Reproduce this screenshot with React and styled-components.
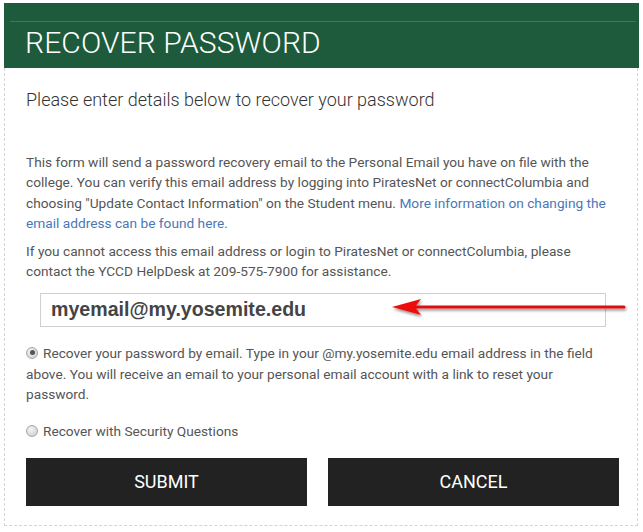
import React, { useState } from "react";
import styled, { createGlobalStyle } from "styled-components";

const GlobalStyle = createGlobalStyle`
  html, body {
    margin: 0;
    padding: 0;
    background: #ffffff;
  }
  body {
    font-family: Roboto, "Liberation Sans", Arial, sans-serif;
  }
`;

const Panel = styled.div`
  margin: 3px 0 0 4px;
  width: 634px;
  height: 523px;
  box-sizing: border-box;
  border: 1px dashed #d4d4d4;
  border-top: none;
`;

const Header = styled.div`
  height: 65px;
  margin: 0 -2px 0 -1px;
  background: #1d5b3c;
  padding: 18px 3px 0 6px;
  box-sizing: border-box;
`;

const HeaderInner = styled.div`
  border-top: 1px solid #3f7a45;
  padding-left: 15px;
`;

const Title = styled.h1`
  margin: 0;
  padding-top: 4px;
  font-family: Roboto, "Liberation Sans", sans-serif;
  font-weight: 300;
  font-size: 30px;
  line-height: 34px;
  color: #ffffff;
  letter-spacing: 0.1px;
`;

const Body = styled.div`
  padding: 20px 18px 0 21px;
`;

const Subtitle = styled.h2`
  margin: 0 0 40px;
  font-weight: 300;
  font-size: 18px;
  line-height: 24px;
  color: #333333;
`;

const Text = styled.p`
  margin: 0 0 ${(p) => p.$gap || 8}px;
  font-size: 13.7px;
  font-weight: 400;
  line-height: 20.3px;
  color: #555555;
`;

const Link = styled.a`
  color: #4a78b4;
  text-decoration: none;
`;

const InputWrap = styled.div`
  position: relative;
  margin: 11px 0 0 14px;
  width: 566px;
`;

const EmailInput = styled.input`
  display: block;
  width: 100%;
  height: 34px;
  box-sizing: border-box;
  border: 1px solid #d0d0d0;
  padding: 0 10px;
  font-family: "Liberation Sans", Arial, sans-serif;
  font-weight: 700;
  font-size: 19.6px;
  color: #444444;
  outline: none;
  background: #ffffff;
`;

const Arrow = styled.svg`
  position: absolute;
  left: 348px;
  top: 3px;
  pointer-events: none;
`;

const Option = styled.label`
  display: block;
  margin-top: ${(p) => p.$top}px;
  font-size: 13.7px;
  line-height: 20.8px;
  color: #555555;
  cursor: pointer;
`;

const Radio = styled.span`
  display: inline-block;
  width: 10px;
  height: 10px;
  border-radius: 50%;
  border: 1px solid #a8a8a8;
  background: radial-gradient(circle at 40% 35%, #f4f4f4, #c9c9c9);
  margin-right: 5px;
  vertical-align: -1px;
  position: relative;

  &::after {
    content: "";
    display: ${(p) => (p.$checked ? "block" : "none")};
    position: absolute;
    left: 2.5px;
    top: 2.5px;
    width: 5px;
    height: 5px;
    border-radius: 50%;
    background: #555555;
  }
`;

const Buttons = styled.div`
  display: flex;
  margin-top: 16px;
`;

const Button = styled.button`
  width: ${(p) => p.$w}px;
  margin-left: ${(p) => p.$ml || 0}px;
  height: 48px;
  border: none;
  background: #222222;
  color: #ffffff;
  font-family: Roboto, "Liberation Sans", sans-serif;
  font-weight: 400;
  font-size: 18px;
  cursor: pointer;
`;

export default function App() {
  const [mode, setMode] = useState("email");
  const [email, setEmail] = useState("myemail@my.yosemite.edu");

  return (
    <>
      <GlobalStyle />
      <Panel>
        <Header>
          <HeaderInner>
            <Title>RECOVER PASSWORD</Title>
          </HeaderInner>
        </Header>
        <Body>
          <Subtitle>Please enter details below to recover your password</Subtitle>
          <Text>
            This form will send a password recovery email to the Personal Email you have on file with the
            college. You can verify this email address by logging into PiratesNet or connectColumbia and
            choosing "Update Contact Information" on the Student menu.{" "}
            <Link href="#">More information on changing the email address can be found here.</Link>
          </Text>
          <Text $gap={0.01}>
            If you cannot access this email address or login to PiratesNet or connectColumbia, please
            contact the YCCD HelpDesk at 209-575-7900 for assistance.
          </Text>
          <InputWrap>
            <EmailInput value={email} onChange={(e) => setEmail(e.target.value)} />
            <Arrow width="240" height="24" viewBox="0 0 240 24">
              <defs>
                <filter id="sh" x="-10%" y="-50%" width="120%" height="200%">
                  <feGaussianBlur in="SourceAlpha" stdDeviation="1.5" />
                  <feOffset dx="1" dy="2" result="b" />
                  <feComponentTransfer>
                    <feFuncA type="linear" slope="0.45" />
                  </feComponentTransfer>
                  <feMerge>
                    <feMergeNode />
                    <feMergeNode in="SourceGraphic" />
                  </feMerge>
                </filter>
              </defs>
              <g filter="url(#sh)">
                <line x1="26" y1="11" x2="236" y2="11" stroke="#e01010" strokeWidth="3" strokeLinecap="round" />
                <path d="M4 11 L33 3 L27 11 L33 19 Z" fill="#ee1010" />
              </g>
            </Arrow>
          </InputWrap>
          <Option $top={16} onClick={() => setMode("email")}>
            <Radio $checked={mode === "email"} />
            Recover your password by email. Type in your @my.yosemite.edu email address in the field
            above. You will receive an email to your personal email account with a link to reset your
            password.
          </Option>
          <Option $top={16} onClick={() => setMode("questions")}>
            <Radio $checked={mode === "questions"} />
            Recover with Security Questions
          </Option>
          <Buttons>
            <Button $w={281}>SUBMIT</Button>
            <Button $w={291} $ml={21}>CANCEL</Button>
          </Buttons>
        </Body>
      </Panel>
    </>
  );
}
